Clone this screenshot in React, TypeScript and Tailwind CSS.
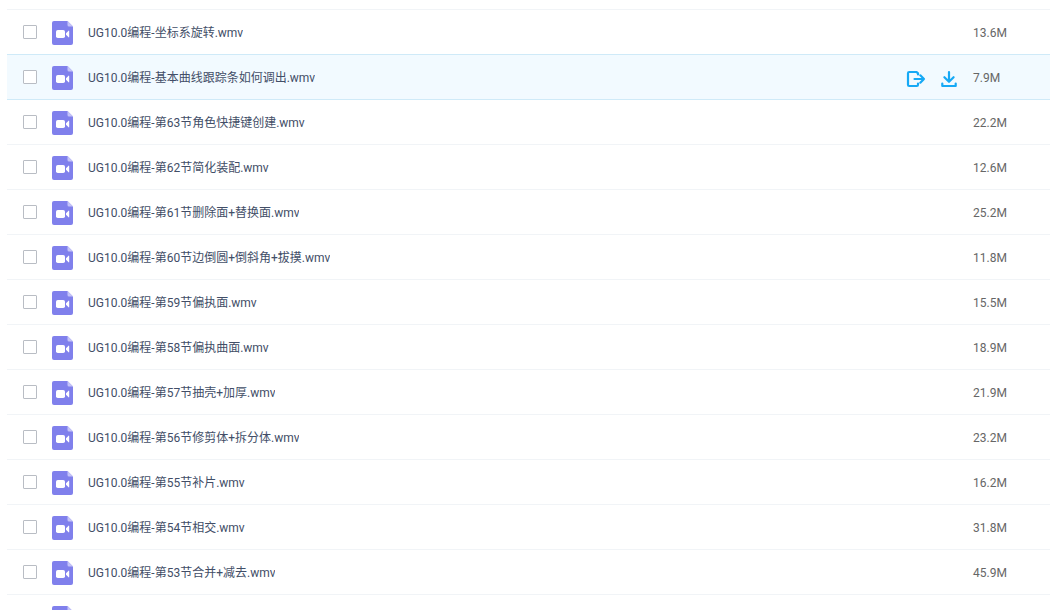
import React from "react";

const files = [
  { name: "UG10.0编程-坐标系旋转.wmv", size: "13.6M" },
  { name: "UG10.0编程-基本曲线跟踪条如何调出.wmv", size: "7.9M", active: true },
  { name: "UG10.0编程-第63节角色快捷键创建.wmv", size: "22.2M" },
  { name: "UG10.0编程-第62节简化装配.wmv", size: "12.6M" },
  { name: "UG10.0编程-第61节删除面+替换面.wmv", size: "25.2M" },
  { name: "UG10.0编程-第60节边倒圆+倒斜角+拔摸.wmv", size: "11.8M" },
  { name: "UG10.0编程-第59节偏执面.wmv", size: "15.5M" },
  { name: "UG10.0编程-第58节偏执曲面.wmv", size: "18.9M" },
  { name: "UG10.0编程-第57节抽壳+加厚.wmv", size: "21.9M" },
  { name: "UG10.0编程-第56节修剪体+拆分体.wmv", size: "23.2M" },
  { name: "UG10.0编程-第55节补片.wmv", size: "16.2M" },
  { name: "UG10.0编程-第54节相交.wmv", size: "31.8M" },
  { name: "UG10.0编程-第53节合并+减去.wmv", size: "45.9M" },
];

const VideoIcon = () => (
  <svg width="21" height="24" viewBox="0 0 21 24" className="shrink-0" aria-hidden="true">
    <path d="M2 0h13.5L21 5.5V22a2 2 0 0 1-2 2H2a2 2 0 0 1-2-2V2a2 2 0 0 1 2-2z" fill="#8080ec" />
    <path d="M15.5 0L21 5.5h-4a1.5 1.5 0 0 1-1.5-1.5z" fill="#c5c4f8" />
    <rect x="4" y="9" width="9" height="8" rx="1.8" fill="#fff" />
    <path d="M14 12.3l2.6-2.6q.6-.4.6.3v6q0 .7-.6.3L14 13.7z" fill="#fff" />
  </svg>
);

const ShareIcon = () => (
  <svg
    width="20"
    height="18"
    viewBox="0 0 20 18"
    fill="none"
    stroke="#16a9f5"
    strokeWidth="2.2"
    strokeLinecap="round"
    strokeLinejoin="round"
    aria-hidden="true"
  >
    <path d="M12 4.5V3.4L10.6 2H3.2A1.2 1.2 0 0 0 2 3.2v11.6A1.2 1.2 0 0 0 3.2 16h7.6a1.2 1.2 0 0 0 1.2-1.2v-1.3" />
    <path d="M8.5 9H18M14.3 5.3L18 9l-3.7 3.7" />
  </svg>
);

const DownloadIcon = () => (
  <svg
    width="16"
    height="18"
    viewBox="0 0 16 18"
    fill="none"
    stroke="#16a9f5"
    strokeWidth="2.2"
    strokeLinecap="round"
    strokeLinejoin="round"
    aria-hidden="true"
  >
    <path d="M8 2v9.5M3.4 7.2L8 11.8l4.6-4.6M1.3 13.6V16h13.4v-2.4" />
  </svg>
);

const FileRow = ({ name, size, active }: { name: string; size: string; active?: boolean }) => {
  return (
    <li
      className={
        active
          ? "relative -mt-px flex h-[46px] items-center border-y border-[#cfeaf8] bg-[#f2faff] pl-4"
          : "-mt-px flex h-[46px] items-center border-y border-[#f1f4f7] pl-4"
      }
    >
      <label className="flex min-w-0 flex-1 items-center">
        <input
          type="checkbox"
          className="size-[14px] shrink-0 appearance-none rounded-[1px] border border-[#b9bdc4] bg-white checked:bg-[#16a9f5]"
        />
        <span className="ml-[15px] pt-px">
          <VideoIcon />
        </span>
        <span className="ml-[15px] truncate pt-0.5 text-[#424e67]">{name}</span>
      </label>
      {active && (
        <div className="mr-4 flex items-center gap-[15px] pt-[3px]">
          <button type="button" aria-label="分享">
            <ShareIcon />
          </button>
          <button type="button" aria-label="下载">
            <DownloadIcon />
          </button>
        </div>
      )}
      <span className="w-[77px] shrink-0 pt-0.5 text-[#666]">{size}</span>
    </li>
  );
};

const App = () => {
  return (
    <main className="h-screen overflow-hidden bg-white pt-[10px] pl-[7px] font-[Roboto,'Noto_Sans_CJK_SC',sans-serif] text-xs">
      <ul>
        {files.map((file) => (
          <FileRow key={file.name} {...file} />
        ))}
        {/* next row, cut off by the bottom of the list */}
        <li className="flex h-[45px] items-center pl-[45px]">
          <VideoIcon />
        </li>
      </ul>
    </main>
  );
};

export default App;
